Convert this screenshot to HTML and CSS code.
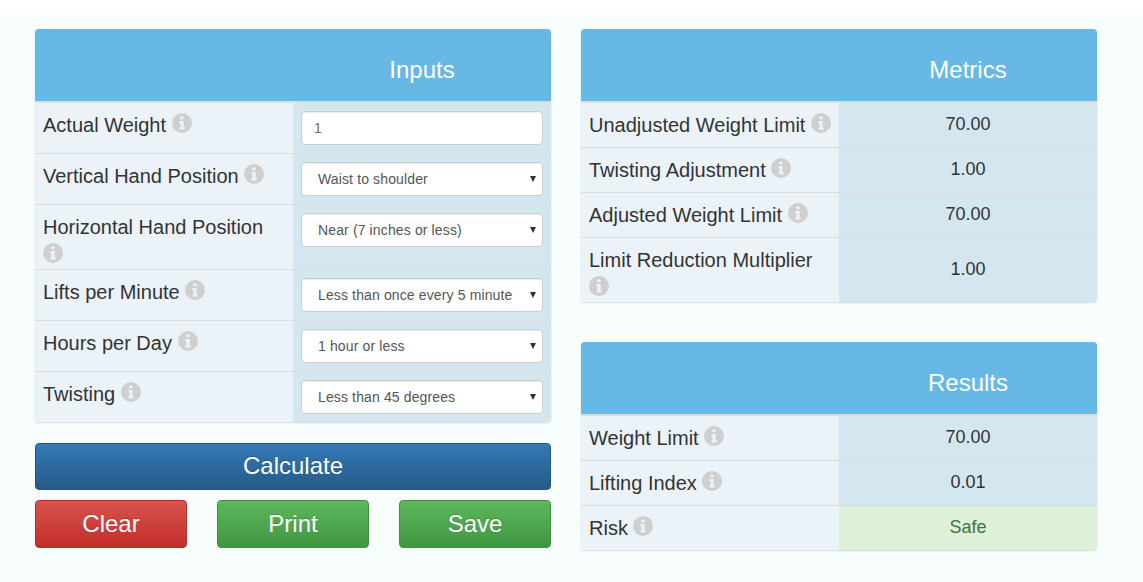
FILE: index.html
```html
<!DOCTYPE html>
<html lang="en">
<head>
<meta charset="utf-8">
<title>Lifting Calculator</title>
<link rel="stylesheet" href="styles.css">
</head>
<body>
<svg class="defs" width="0" height="0" aria-hidden="true">
  <symbol id="info" viewBox="0 0 20 20">
    <path fill-rule="evenodd" d="M10 0a10 10 0 1 0 0 20a10 10 0 0 0 0-20zM8.2 3.4h3.4v2.8H8.2zM7.4 8h4.2v6.2h1.1v2.4H7.4v-2.4h1.1v-3.8H7.4z"/>
  </symbol>
</svg>
<main class="page">
  <section class="column">
    <table class="panel">
      <thead><tr><th></th><th>Inputs</th></tr></thead>
      <tbody>
        <tr class="form-row"><td class="label">Actual Weight <svg class="info"><use href="#info"/></svg></td><td class="field"><input class="control text-input" type="text" value="1"></td></tr>
        <tr class="form-row"><td class="label">Vertical Hand Position <svg class="info"><use href="#info"/></svg></td><td class="field"><div class="select"><select class="control"><option>Waist to shoulder</option></select></div></td></tr>
        <tr class="form-row"><td class="label">Horizontal Hand Position <svg class="info"><use href="#info"/></svg></td><td class="field"><div class="select"><select class="control"><option>Near (7 inches or less)</option></select></div></td></tr>
        <tr class="form-row"><td class="label">Lifts per Minute <svg class="info"><use href="#info"/></svg></td><td class="field"><div class="select"><select class="control"><option>Less than once every 5 minutes</option></select></div></td></tr>
        <tr class="form-row"><td class="label">Hours per Day <svg class="info"><use href="#info"/></svg></td><td class="field"><div class="select"><select class="control"><option>1 hour or less</option></select></div></td></tr>
        <tr class="form-row"><td class="label">Twisting <svg class="info"><use href="#info"/></svg></td><td class="field"><div class="select"><select class="control"><option>Less than 45 degrees</option></select></div></td></tr>
      </tbody>
    </table>
    <button class="btn btn-primary" type="button">Calculate</button>
    <div class="actions">
      <button class="btn btn-danger" type="button">Clear</button>
      <button class="btn btn-success" type="button">Print</button>
      <button class="btn btn-success" type="button">Save</button>
    </div>
  </section>
  <section class="column column-right">
    <table class="panel">
      <thead><tr><th></th><th>Metrics</th></tr></thead>
      <tbody>
        <tr><td class="label">Unadjusted Weight Limit <svg class="info"><use href="#info"/></svg></td><td class="value">70.00</td></tr>
        <tr><td class="label">Twisting Adjustment <svg class="info"><use href="#info"/></svg></td><td class="value">1.00</td></tr>
        <tr><td class="label">Adjusted Weight Limit <svg class="info"><use href="#info"/></svg></td><td class="value">70.00</td></tr>
        <tr><td class="label">Limit Reduction Multiplier <svg class="info"><use href="#info"/></svg></td><td class="value">1.00</td></tr>
      </tbody>
    </table>
    <table class="panel">
      <thead><tr><th></th><th>Results</th></tr></thead>
      <tbody>
        <tr><td class="label">Weight Limit <svg class="info"><use href="#info"/></svg></td><td class="value">70.00</td></tr>
        <tr><td class="label">Lifting Index <svg class="info"><use href="#info"/></svg></td><td class="value">0.01</td></tr>
        <tr><td class="label">Risk <svg class="info"><use href="#info"/></svg></td><td class="value value-safe">Safe</td></tr>
      </tbody>
    </table>
  </section>
</main>
</body>
</html>
```
FILE: styles.css
```css
* { box-sizing: border-box; }
html, body { margin: 0; height: 100%; }
body {
  background: #fff;
  padding-top: 10px;
  font-family: "Liberation Sans", Arial, sans-serif;
  color: #333;
  overflow: hidden;
}
.defs { position: absolute; }
.page {
  display: flex;
  gap: 30px;
  height: 100%;
  padding: 19px 46px 0 35px;
  background: #f8fdfd;
}
.column { width: 516px; display: flex; flex-direction: column; }
.column-right { gap: 40px; }
.panel {
  width: 516px;
  table-layout: fixed;
  border-collapse: separate;
  border-spacing: 0;
  border-radius: 4px;
  box-shadow: 0 1px 2px rgba(0, 0, 0, .15);
  background: #ebf3f9;
}
.panel th {
  height: 74px;
  padding: 10px 8px 0;
  background: #67b8e5;
  background-clip: padding-box;
  border-bottom: 2px solid #ddd;
  color: #fff;
  font-size: 24px;
  line-height: 34px;
  font-weight: 400;
  text-align: center;
  vertical-align: middle;
}
.panel th:first-child { border-top-left-radius: 4px; }
.panel th:last-child { border-top-right-radius: 4px; }
.panel td {
  border-bottom: 1px solid #ddd;
}
.panel tr:last-child td { border-bottom: 0; }
.panel tr:last-child td:first-child { border-bottom-left-radius: 4px; }
.panel tr:last-child td:last-child { border-bottom-right-radius: 4px; }
.label {
  height: 45px;
  padding: 8px 8px 0;
  font-size: 20px;
  line-height: 28px;
  vertical-align: top;
  background: #ebf3f9;
}
.form-row .label { height: 51px; }
.panel tr:last-child .label { height: 44px; }
.panel .form-row:last-child .label { height: 50px; }
.info {
  display: inline-block;
  width: 20px;
  height: 20px;
  fill: #cfcfcf;
  vertical-align: -1px;
}
.field, .value { background: #d4e7f1; }
.field { padding: 8px; vertical-align: top; }
.value {
  padding: 6px 8px 8px;
  font-size: 18px;
  line-height: 24px;
  text-align: center;
  vertical-align: middle;
}
.value-safe { background: #dff0d8; color: #3c763d; }
.select { position: relative; }
.select::after {
  content: "";
  position: absolute;
  top: 14px;
  right: 7px;
  border-style: solid;
  border-width: 6px 3.5px 0;
  border-color: #333 transparent transparent;
  pointer-events: none;
}
.control {
  display: block;
  width: 100%;
  height: 34px;
  padding: 6px 29px 6px 12px;
  border: 1px solid #ccc;
  border-radius: 4px;
  background-color: #fff;
  box-shadow: inset 0 1px 1px rgba(0, 0, 0, .075);
  font-family: inherit;
  font-size: 14px;
  letter-spacing: .13px;
  color: #555;
}
select.control { appearance: none; padding-left: 16px; }
.text-input { color: #8a5a50; }
.btn {
  display: block;
  font-family: inherit;
  font-size: 24px;
  line-height: 1;
  color: #fff;
  border: 1px solid transparent;
  border-radius: 4px;
  padding: 0 0 2px;
  text-shadow: 0 -1px 0 rgba(0, 0, 0, .2);
}
.column > .btn { width: 516px; height: 47px; margin: 21px 0 10px; }
.actions { display: flex; justify-content: space-between; }
.actions .btn { width: 152px; height: 48px; padding: 0; }
.btn-primary { background: linear-gradient(#337ab7, #265a88); border-color: #245580; }
.btn-danger { background: linear-gradient(#d9534f, #c12e2a); border-color: #b92c28; }
.btn-success { background: linear-gradient(#5cb85c, #419641); border-color: #3e8f3e; }
```
